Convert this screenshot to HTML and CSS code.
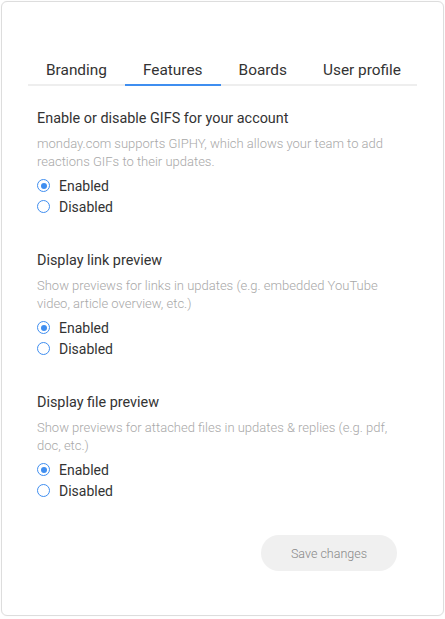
FILE: index.html
```html
<!DOCTYPE html>
<html lang="en">
<head>
    <meta charset="UTF-8">
    <meta name="viewport" content="width=device-width, initial-scale=1.0">
    <title>Settings - Features</title>
    <link rel="stylesheet" href="styles.css">
</head>
<body>
    <div class="card">
        <div class="tabs">
            <div class="tab">Branding</div>
            <div class="tab active">Features</div>
            <div class="tab">Boards</div>
            <div class="tab">User profile</div>
        </div>

        <div class="content">
            <div class="setting">
                <h3>Enable or disable GIFS for your account</h3>
                <p class="desc">monday.com supports GIPHY, which allows your team to add reactions GIFs to their updates.</p>
                <label class="radio"><input type="radio" name="gifs" checked><span class="dot"></span>Enabled</label>
                <label class="radio"><input type="radio" name="gifs"><span class="dot"></span>Disabled</label>
            </div>

            <div class="setting">
                <h3>Display link preview</h3>
                <p class="desc">Show previews for links in updates (e.g. embedded YouTube video, article overview, etc.)</p>
                <label class="radio"><input type="radio" name="links" checked><span class="dot"></span>Enabled</label>
                <label class="radio"><input type="radio" name="links"><span class="dot"></span>Disabled</label>
            </div>

            <div class="setting">
                <h3>Display file preview</h3>
                <p class="desc">Show previews for attached files in updates &amp; replies (e.g. pdf, doc, etc.)</p>
                <label class="radio"><input type="radio" name="files" checked><span class="dot"></span>Enabled</label>
                <label class="radio"><input type="radio" name="files"><span class="dot"></span>Disabled</label>
            </div>

            <div class="actions">
                <button class="save-btn">Save changes</button>
            </div>
        </div>
    </div>
</body>
</html>
```

FILE: styles.css
```css
body {
    margin: 0;
    font-family: Roboto, "Liberation Sans", Arial, sans-serif;
    background-color: #fff;
    color: #333;
}
.card {
    margin: 1px;
    height: 615px;
    box-sizing: border-box;
    border: 1px solid #ddd;
    border-radius: 6px;
    box-shadow: 0 0 1px rgba(0,0,0,0.1);
    padding-top: 58px;
}
.tabs {
    display: flex;
    margin: 0 26px;
    border-bottom: 2px solid #eee;
}
.tab {
    flex-shrink: 0;
    white-space: nowrap;
    padding: 0 18px 4px;
    font-size: 15.4px;
    line-height: 20px;
    color: #333;
    margin-bottom: -2px;
    border-bottom: 2px solid transparent;
}
.tab.active {
    border-bottom-color: #3f8ef0;
}
.content {
    padding: 23px 35px 0;
}
.setting {
    margin-bottom: 34px;
}
.setting h3 {
    margin: 0 0 6px;
    font-size: 14.4px;
    font-weight: 400;
    line-height: 20px;
    color: #333;
}
.desc {
    margin: 0 0 4px;
    font-size: 13px;
    font-weight: 300;
    line-height: 18px;
    color: #a8a8a8;
}
.radio {
    display: flex;
    align-items: center;
    height: 21px;
    font-size: 14px;
    color: #333;
}
.radio input {
    display: none;
}
.radio .dot {
    width: 11px;
    height: 11px;
    border: 1px solid #3f8ef0;
    border-radius: 50%;
    margin-right: 9px;
    position: relative;
}
.radio input:checked + .dot::after {
    content: "";
    position: absolute;
    top: 2.5px;
    left: 2.5px;
    width: 6px;
    height: 6px;
    border-radius: 50%;
    background-color: #3f8ef0;
}
.actions {
    display: flex;
    justify-content: flex-end;
    padding-right: 11px;
}
.save-btn {
    width: 136px;
    height: 36px;
    border: none;
    border-radius: 18px;
    background-color: #f0f0f0;
    color: #888;
    font-family: inherit;
    font-size: 12.5px;
    font-weight: 300;
}
```
